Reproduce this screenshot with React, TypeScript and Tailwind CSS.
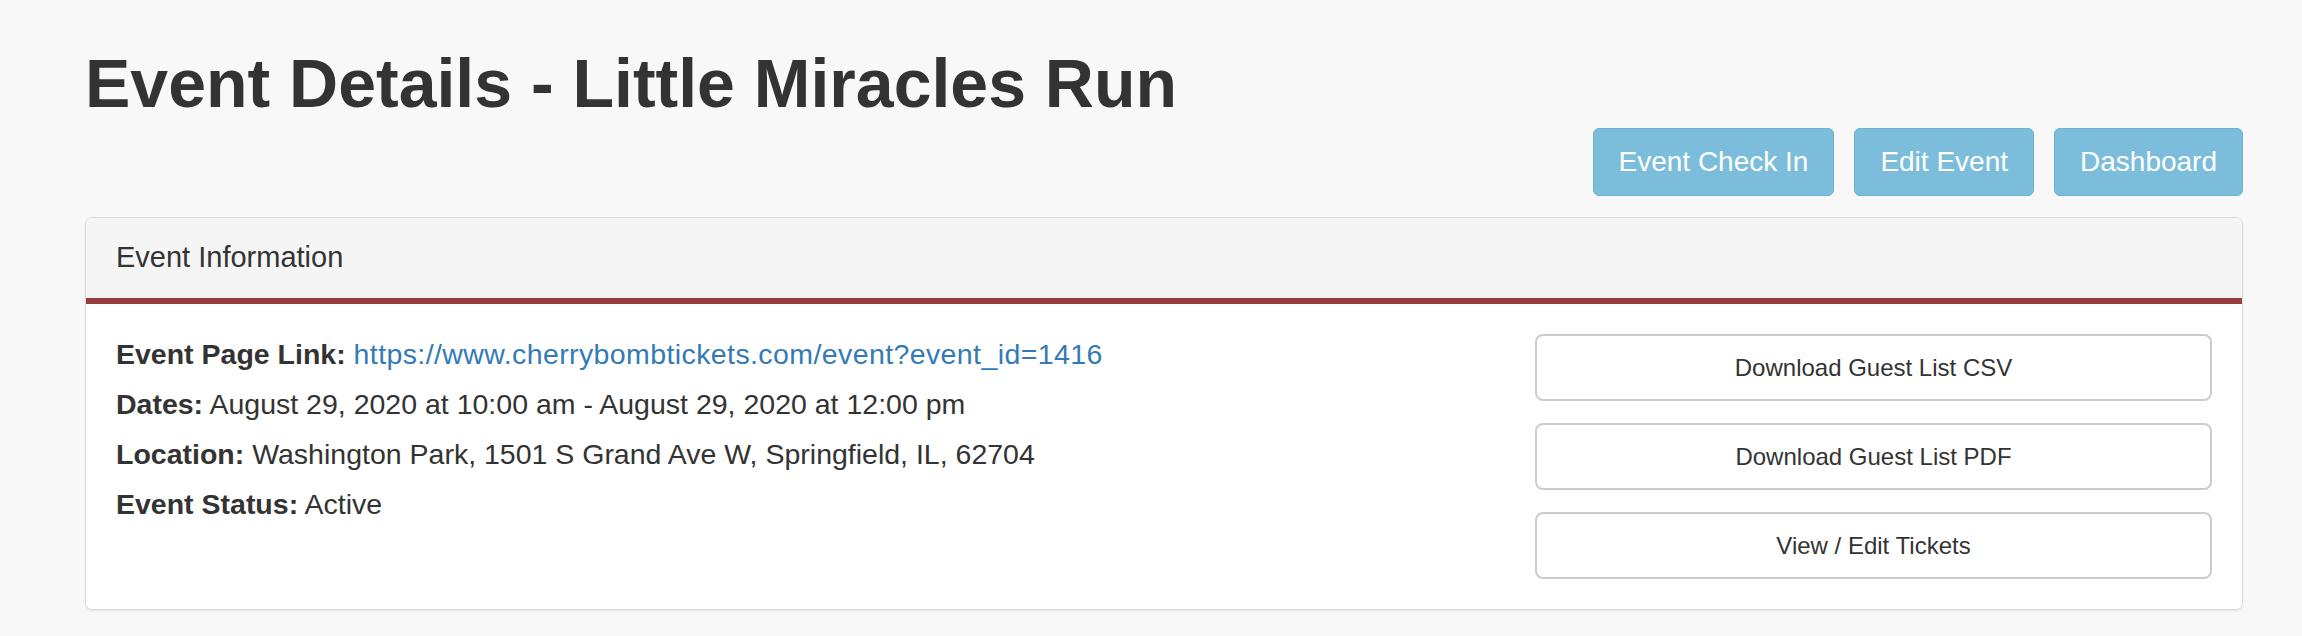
import React from 'react'

const headerActions = ['Event Check In', 'Edit Event', 'Dashboard']
const panelActions = ['Download Guest List CSV', 'Download Guest List PDF', 'View / Edit Tickets']

export default function App() {
  return (
    <div className="min-h-screen bg-[#f8f8f8] text-[#333] font-['Liberation_Sans',Arial,sans-serif]">
      <div className="ml-[85px] w-[2158px] pt-[46px] pb-[28px]">
        <h1 className="text-[68px] leading-[75px] font-bold">Event Details - Little Miracles Run</h1>

        {/* Top actions */}
        <div className="mt-[7px] flex justify-end gap-5">
          {headerActions.map(label => (
            <button
              key={label}
              className="h-[68px] px-[25px] text-[28px] text-white bg-[#7bbddb] border border-[#6cb2d3] rounded-[6px]"
            >
              {label}
            </button>
          ))}
        </div>

        {/* Event information panel */}
        <div className="mt-[21px] bg-white border border-[#ddd] rounded-[7px] shadow-[0_1px_2px_rgba(0,0,0,0.08)] overflow-hidden">
          <div className="h-[80px] flex items-center px-[30px] bg-[#f5f5f5] text-[29px]">Event Information</div>
          <div className="h-[6px] bg-[#963e3c]" />
          <div className="flex p-[30px]">
            <div className="flex-1 text-[28.5px] leading-[40px]">
              <p className="mb-[10px]">
                <b>Event Page Link:</b>{' '}
                <a href="#" className="text-[#337ab7] tracking-[0.4px]">https://www.cherrybombtickets.com/event?event_id=1416</a>
              </p>
              <p className="mb-[10px]">
                <b>Dates:</b> August 29, 2020 at 10:00 am - August 29, 2020 at 12:00 pm
              </p>
              <p className="mb-[10px]">
                <b>Location:</b> Washington Park, 1501 S Grand Ave W, Springfield, IL, 62704
              </p>
              <p>
                <b>Event Status:</b> Active
              </p>
            </div>
            <div className="w-[677px] flex flex-col gap-[22px]">
              {panelActions.map(label => (
                <button
                  key={label}
                  className="h-[67px] w-full text-[24px] text-[#333] bg-white border-2 border-[#ccc] rounded-[8px]"
                >
                  {label}
                </button>
              ))}
            </div>
          </div>
        </div>
      </div>
    </div>
  )
}
